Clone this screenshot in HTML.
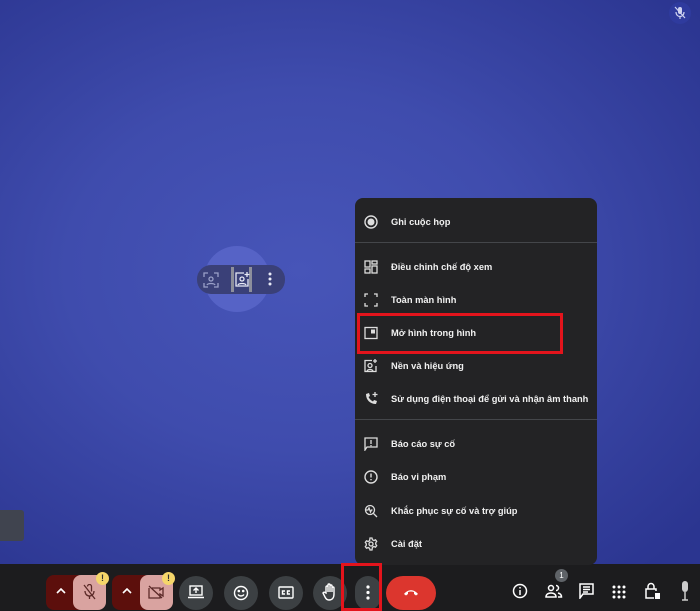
<!DOCTYPE html>
<html><head><meta charset="utf-8"><style>
*{margin:0;padding:0;box-sizing:border-box}
body{width:700px;height:611px;overflow:hidden;position:relative;font-family:"Liberation Sans","DejaVu Sans",sans-serif;background:#1c1c1e}
#stage{position:absolute;left:0;top:0;width:700px;height:564px;background:radial-gradient(ellipse 520px 400px at 300px 270px,#4755b8 0%,#3f4cad 45%,#323d9a 80%,#2b3590 100%)}
.abs{position:absolute}
#menu{position:absolute;left:355px;top:198px;width:242px;height:367px;background:#232325;border-radius:8px}
.it{position:absolute;left:0;width:242px;height:20px;color:#f1f1f1;font-size:9.3px;font-weight:bold;line-height:24px}
.it span{position:absolute;left:36px;white-space:nowrap}
.it svg{position:absolute;left:9px;top:5px}
.div{position:absolute;left:0;width:242px;height:1px;background:#44464a}
.btn{position:absolute;top:576px;width:34px;height:34px;border-radius:17px;background:#3c4043}
.ri{position:absolute;top:583px}
</style></head><body>
<div id="stage">
  <div class="abs" style="left:669px;top:2px;width:22px;height:22px;border-radius:11px;background:#2f3b9e"></div>
  <svg class="abs" style="left:674px;top:6px" width="12" height="14" viewBox="0 0 12 14"><rect x="4" y="1" width="4" height="7" rx="2" fill="#cfd3f0"/><path d="M2 6c0 3 2 4.5 4 4.5s4-1.5 4-4.5M6 10.5V13M1 1l10 11" stroke="#cfd3f0" stroke-width="1.2" fill="none"/></svg>
  <div class="abs" style="left:0;top:510px;width:24px;height:31px;background:#40444f;border-radius:0 3px 3px 0"></div>
  <div class="abs" style="left:204px;top:246px;width:66px;height:66px;border-radius:33px;background:#5663c6"></div>
  <div class="abs" style="left:197px;top:265px;width:88px;height:29px;border-radius:14px;background:#3a4078"></div>
  <div class="abs" style="left:231px;top:267px;width:3px;height:25px;background:#8d8f9c"></div>
  <div class="abs" style="left:249px;top:267px;width:3px;height:25px;background:#8d8f9c"></div>
  <svg class="abs" style="left:203px;top:272px" width="16" height="16" viewBox="0 0 16 16" fill="none" stroke="#9aa0c8" stroke-width="1.3"><path d="M1 5V1h4M11 1h4v4M15 11v4h-4M5 15H1v-4"/><circle cx="8" cy="7" r="2"/><path d="M4 13c1-2 7-2 8 0"/></svg>
  <svg class="abs" style="left:235px;top:271px" width="15" height="16" viewBox="0 0 15 16" fill="none" stroke="#e8eaf6" stroke-width="1.3"><path d="M9 2H1v13h12V8"/><circle cx="7" cy="8" r="2"/><path d="M3 14c1-2 7-2 8 0M12 1v5M9.5 3.5h5"/></svg>
  <svg class="abs" style="left:268px;top:272px" width="4" height="14"><circle cx="2" cy="2" r="1.5" fill="#e8eaf6"/><circle cx="2" cy="7" r="1.5" fill="#e8eaf6"/><circle cx="2" cy="12" r="1.5" fill="#e8eaf6"/></svg>
</div>
<div id="menu">
  <div class="it" style="top:12px"><svg width="14" height="14" viewBox="0 0 14 14"><circle cx="7" cy="7" r="6" stroke="#ddd" stroke-width="1.4" fill="none"/><circle cx="7" cy="7" r="3.5" fill="#ddd"/></svg><span>Ghi cuộc họp</span></div>
  <div class="div" style="top:44px"></div>
  <div class="it" style="top:57px"><svg width="14" height="14" viewBox="0 0 14 14" fill="none" stroke="#ddd" stroke-width="1.3"><rect x="1" y="1" width="5" height="6"/><rect x="8" y="1" width="5" height="3"/><rect x="1" y="9" width="5" height="4"/><rect x="8" y="6" width="5" height="7"/></svg><span>Điều chỉnh chế độ xem</span></div>
  <div class="it" style="top:90px"><svg width="14" height="14" viewBox="0 0 14 14" fill="none" stroke="#ddd" stroke-width="1.3"><path d="M1 4V1h3M10 1h3v3M13 10v3h-3M4 13H1v-3"/></svg><span>Toàn màn hình</span></div>
  <div class="it" style="top:123px"><svg width="14" height="14" viewBox="0 0 14 14"><rect x="1" y="1.5" width="12" height="11" stroke="#ddd" stroke-width="1.3" fill="none"/><rect x="7" y="3.5" width="4" height="4" fill="#ddd"/></svg><span>Mở hình trong hình</span></div>
  <div class="it" style="top:156px"><svg width="14" height="14" viewBox="0 0 14 14" fill="none" stroke="#ddd" stroke-width="1.3"><path d="M8 1.5H1v11h11V7"/><circle cx="6" cy="6.5" r="2"/><path d="M3 12c1-2 5-2 6 0M11 0v4M9 2h4"/></svg><span>Nền và hiệu ứng</span></div>
  <div class="it" style="top:189px"><svg width="14" height="14" viewBox="0 0 14 14"><path d="M2 2c0 6 4 10 10 10l1-3-3-1-1 1.5c-2-1-3.5-2.5-4.5-4.5L6 4 5 1z" fill="#ddd"/><path d="M11 0v5M8.5 2.5h5" stroke="#ddd" stroke-width="1.3"/></svg><span>Sử dụng điện thoại để gửi và nhận âm thanh</span></div>
  <div class="div" style="top:221px"></div>
  <div class="it" style="top:234px"><svg width="14" height="14" viewBox="0 0 14 14" fill="none" stroke="#ddd" stroke-width="1.3"><path d="M1 13V1h12v9H3z"/><path d="M7 3v4M7 8v1.3"/></svg><span>Báo cáo sự cố</span></div>
  <div class="it" style="top:267px"><svg width="14" height="14" viewBox="0 0 14 14" fill="none" stroke="#ddd" stroke-width="1.4"><circle cx="7" cy="7" r="6"/><path d="M7 3.5v4M7 9v1.3"/></svg><span>Báo vi phạm</span></div>
  <div class="it" style="top:301px"><svg width="14" height="14" viewBox="0 0 14 14" fill="none" stroke="#ddd" stroke-width="1.3"><circle cx="6" cy="6" r="4.5"/><path d="M9.5 9.5l3.5 3.5M2 6h2l1-2 1.5 4 1-2h1"/></svg><span>Khắc phục sự cố và trợ giúp</span></div>
  <div class="it" style="top:334px"><svg width="14" height="14" viewBox="0 0 14 14" fill="none" stroke="#ddd" stroke-width="1.3"><circle cx="7" cy="7" r="2"/><path d="M6 1h2l.4 1.7 1.5.8 1.6-.7 1.2 1.6-1 1.4v1.4l1 1.4-1.2 1.6-1.6-.7-1.5.8L8 13H6l-.4-1.7-1.5-.8-1.6.7-1.2-1.6 1-1.4V6.8l-1-1.4 1.2-1.6 1.6.7 1.5-.8z"/></svg><span>Cài đặt</span></div>
</div>
<div class="abs" style="left:357px;top:313px;width:206px;height:41px;border:3px solid #e3141c"></div>

<div class="abs" style="left:46px;top:575px;width:34px;height:35px;background:#5c0f0c;border-radius:8px 0 0 8px"></div>
<div class="abs" style="left:73px;top:575px;width:33px;height:35px;background:#d9a3a0;border-radius:8px"></div>
<div class="abs" style="left:112px;top:575px;width:34px;height:35px;background:#5c0f0c;border-radius:8px 0 0 8px"></div>
<div class="abs" style="left:140px;top:575px;width:33px;height:35px;background:#d9a3a0;border-radius:8px"></div>
<svg class="abs" style="left:56px;top:588px" width="10" height="6"><path d="M1 5l4-4 4 4" stroke="#fff" stroke-width="1.6" fill="none"/></svg>
<svg class="abs" style="left:122px;top:588px" width="10" height="6"><path d="M1 5l4-4 4 4" stroke="#fff" stroke-width="1.6" fill="none"/></svg>
<svg class="abs" style="left:83px;top:584px" width="13" height="16" viewBox="0 0 13 16"><path d="M4.5 2.5a2 2 0 0 1 4 0v5M2 7c0 3 2 5 4.5 5s4.5-2 4.5-5M6.5 12v3M1 1l11 14" stroke="#5c2a28" stroke-width="1.3" fill="none"/></svg>
<svg class="abs" style="left:148px;top:585px" width="16" height="14" viewBox="0 0 16 14"><path d="M1 3v10h11V9l3 2V3l-3 2V3H4M1 1l13 12" stroke="#5c2a28" stroke-width="1.3" fill="none"/></svg>
<div class="abs" style="left:96px;top:572px;width:13px;height:13px;border-radius:7px;background:#f5d66a;color:#333;font-size:9px;font-weight:bold;text-align:center;line-height:13px">!</div>
<div class="abs" style="left:162px;top:572px;width:13px;height:13px;border-radius:7px;background:#f5d66a;color:#333;font-size:9px;font-weight:bold;text-align:center;line-height:13px">!</div>
<div class="btn" style="left:179px"></div>
<svg class="abs" style="left:188px;top:585px" width="16" height="14" viewBox="0 0 16 14"><rect x="2" y="1" width="12" height="9" stroke="#fff" stroke-width="1.4" fill="none"/><path d="M0 12.5h16M8 8V3M5.5 5.5L8 3l2.5 2.5" stroke="#fff" stroke-width="1.4" fill="none"/></svg>
<div class="btn" style="left:224px"></div>
<svg class="abs" style="left:233px;top:585px" width="16" height="16" viewBox="0 0 16 16" fill="none" stroke="#fff" stroke-width="1.4"><circle cx="8" cy="8" r="6.5"/><path d="M5 9.5c1.5 2 4.5 2 6 0"/><circle cx="5.8" cy="6" r=".6" fill="#fff"/><circle cx="10.2" cy="6" r=".6" fill="#fff"/></svg>
<div class="btn" style="left:269px"></div>
<svg class="abs" style="left:278px;top:586px" width="16" height="13" viewBox="0 0 16 13" fill="none" stroke="#fff" stroke-width="1.4"><rect x="1" y="1" width="14" height="11" rx="1"/><path d="M7 5H4.5v3H7M12 5H9.5v3H12"/></svg>
<div class="btn" style="left:313px"></div>
<svg class="abs" style="left:322px;top:583px" width="16" height="18" viewBox="0 0 16 18" fill="none" stroke="#fff" stroke-width="1.4"><path d="M4 10V4a1 1 0 0 1 2 0v5V2a1 1 0 0 1 2 0v7V3a1 1 0 0 1 2 0v6V5a1 1 0 0 1 2 0v6c0 4-2 6-5 6-2 0-3-1-4-3L1 10c.5-1 1.5-1 2-.5z"/></svg>
<div class="abs" style="left:355px;top:576px;width:26px;height:34px;border-radius:13px;background:#3c4043"></div>
<svg class="abs" style="left:366px;top:585px" width="4" height="15"><circle cx="2" cy="2" r="1.6" fill="#fff"/><circle cx="2" cy="7.5" r="1.6" fill="#fff"/><circle cx="2" cy="13" r="1.6" fill="#fff"/></svg>
<div class="abs" style="left:341px;top:563px;width:41px;height:48px;border:3px solid #e3141c"></div>
<div class="abs" style="left:386px;top:576px;width:50px;height:34px;border-radius:17px;background:#dc362e"></div>
<svg class="abs" style="left:403px;top:588px" width="16" height="8" viewBox="0 0 16 8"><path d="M1 6c4-5 10-5 14 0l-2 1.5-2-1.5V4c-2-.7-4-.7-6 0v2L3 7.5z" fill="#fff"/></svg>

<svg class="ri" style="left:512px" width="16" height="16" viewBox="0 0 16 16" fill="none" stroke="#fff" stroke-width="1.5"><circle cx="8" cy="8" r="6.5"/><path d="M8 7v5M8 4v1.5"/></svg>
<div class="abs" style="left:555px;top:569px;width:13px;height:13px;border-radius:7px;background:#5f6368;color:#fff;font-size:8px;text-align:center;line-height:13px">1</div>
<svg class="ri" style="left:545px" width="18" height="16" viewBox="0 0 18 16" fill="none" stroke="#fff" stroke-width="1.5"><circle cx="6" cy="5" r="2.5"/><path d="M1 14c0-3 2.5-4 5-4s5 1 5 4zM11 2.5a2.5 2.5 0 0 1 0 5M13 10c2 .5 3.5 1.5 3.5 4H13"/></svg>
<svg class="ri" style="left:579px" width="15" height="16" viewBox="0 0 15 16" fill="none" stroke="#fff" stroke-width="1.5"><path d="M1 15V1h13v10H4z"/><path d="M4 4h7M4 6.5h7M4 9h5"/></svg>
<svg class="ri" style="left:612px;top:585px" width="14" height="14" viewBox="0 0 14 14" fill="#fff"><circle cx="2" cy="2" r="1.5"/><circle cx="7" cy="2" r="1.5"/><circle cx="12" cy="2" r="1.5"/><circle cx="2" cy="7" r="1.5"/><circle cx="7" cy="7" r="1.5"/><circle cx="12" cy="7" r="1.5"/><circle cx="2" cy="12" r="1.5"/><circle cx="7" cy="12" r="1.5"/><circle cx="12" cy="12" r="1.5"/></svg>
<svg class="ri" style="left:645px;top:582px" width="16" height="18" viewBox="0 0 16 18" fill="none" stroke="#fff" stroke-width="1.5"><path d="M3 7V4.5a3 3 0 0 1 6 0V7"/><path d="M9 16H1V7h10v2"/><rect x="10" y="11" width="5" height="6" fill="#fff" stroke="none"/></svg>
<svg class="ri" style="left:680px;top:580px" width="10" height="22" viewBox="0 0 10 22"><rect x="2" y="1" width="6" height="11" rx="3" fill="#ccc"/><path d="M5 12v8M2 20h6" stroke="#ccc" stroke-width="1.5"/></svg>
</body></html>
